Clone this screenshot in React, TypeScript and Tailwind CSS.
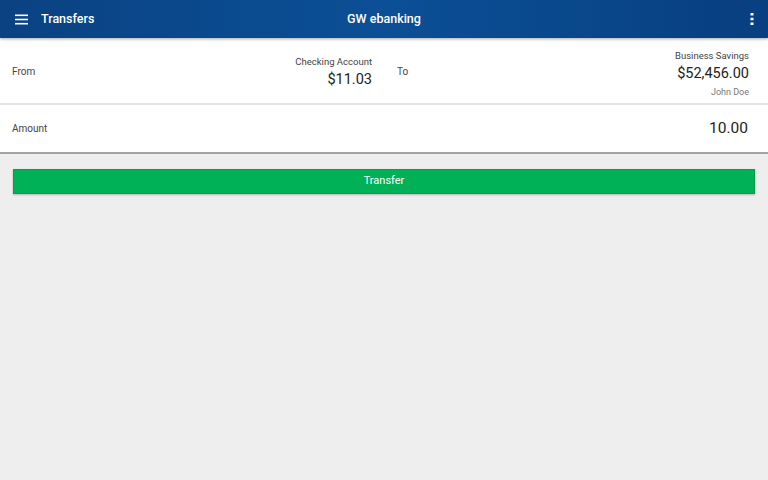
export default function App() {
  return (
    <div className="w-[768px] h-[480px] bg-[#eeeeee] flex flex-col overflow-hidden font-['Roboto',sans-serif]">
      <header className="h-[38px] shrink-0 flex items-center relative z-10 shadow-[0_1px_3px_rgba(0,0,0,0.35)] bg-[linear-gradient(to_right,#0a4282,#0b4f96_50%,#083f80)] text-white">
        <svg className="ml-[15px] w-[13px] h-[11px]" viewBox="0 0 13 11" fill="white">
          <rect x="0" y="0.5" width="13" height="1.6" />
          <rect x="0" y="4.7" width="13" height="1.6" />
          <rect x="0" y="8.9" width="13" height="1.6" />
        </svg>
        <span className="ml-[13px] text-[12.5px] font-medium">Transfers</span>
        <span className="absolute left-1/2 -translate-x-1/2 text-[12.5px] font-medium">GW ebanking</span>
        <svg className="ml-auto mr-[14px] w-[4px] h-[12px]" viewBox="0 0 4 12" fill="white">
          <rect x="0.5" y="0" width="3" height="2.5" />
          <rect x="0.5" y="4.75" width="3" height="2.5" />
          <rect x="0.5" y="9.5" width="3" height="2.5" />
        </svg>
      </header>

      <div className="bg-white flex h-[67px] border-b-2 border-[#e2e2e2]">
        <div className="w-1/2 flex items-start pl-[12px] pr-[12px]">
          <span className="text-[10px] text-[#444444] leading-[14px] mt-[27px]">From</span>
          <div className="ml-auto flex flex-col items-end mt-[17px]">
            <span className="text-[9.5px] text-[#444444] leading-[14px]">Checking Account</span>
            <span className="text-[14.5px] text-[#222222] leading-[22px]">$11.03</span>
          </div>
        </div>
        <div className="w-1/2 flex items-start pl-[13px] pr-[19px]">
          <span className="text-[10px] text-[#444444] leading-[14px] mt-[27px]">To</span>
          <div className="ml-auto flex flex-col items-end mt-[11px]">
            <span className="text-[9.5px] text-[#444444] leading-[14px]">Business Savings</span>
            <span className="text-[14.5px] text-[#222222] leading-[22px]">$52,456.00</span>
            <span className="text-[9px] text-[#777777] leading-[14px]">John Doe</span>
          </div>
        </div>
      </div>

      <div className="bg-white flex items-center h-[49px] pl-[12px] pr-[20px] border-b-2 border-[#a3a3a3]">
        <span className="text-[10px] text-[#444444]">Amount</span>
        <span className="ml-auto text-[15.5px] text-[#222222]">10.00</span>
      </div>

      <div className="px-[13px] pt-[15px]">
        <button className="w-full h-[25px] bg-[#00b158] border border-[#0c9a4c] shadow-[0_1px_2px_rgba(0,0,0,0.25)] text-white text-[11px] flex items-center justify-center">
          Transfer
        </button>
      </div>
    </div>
  );
}
